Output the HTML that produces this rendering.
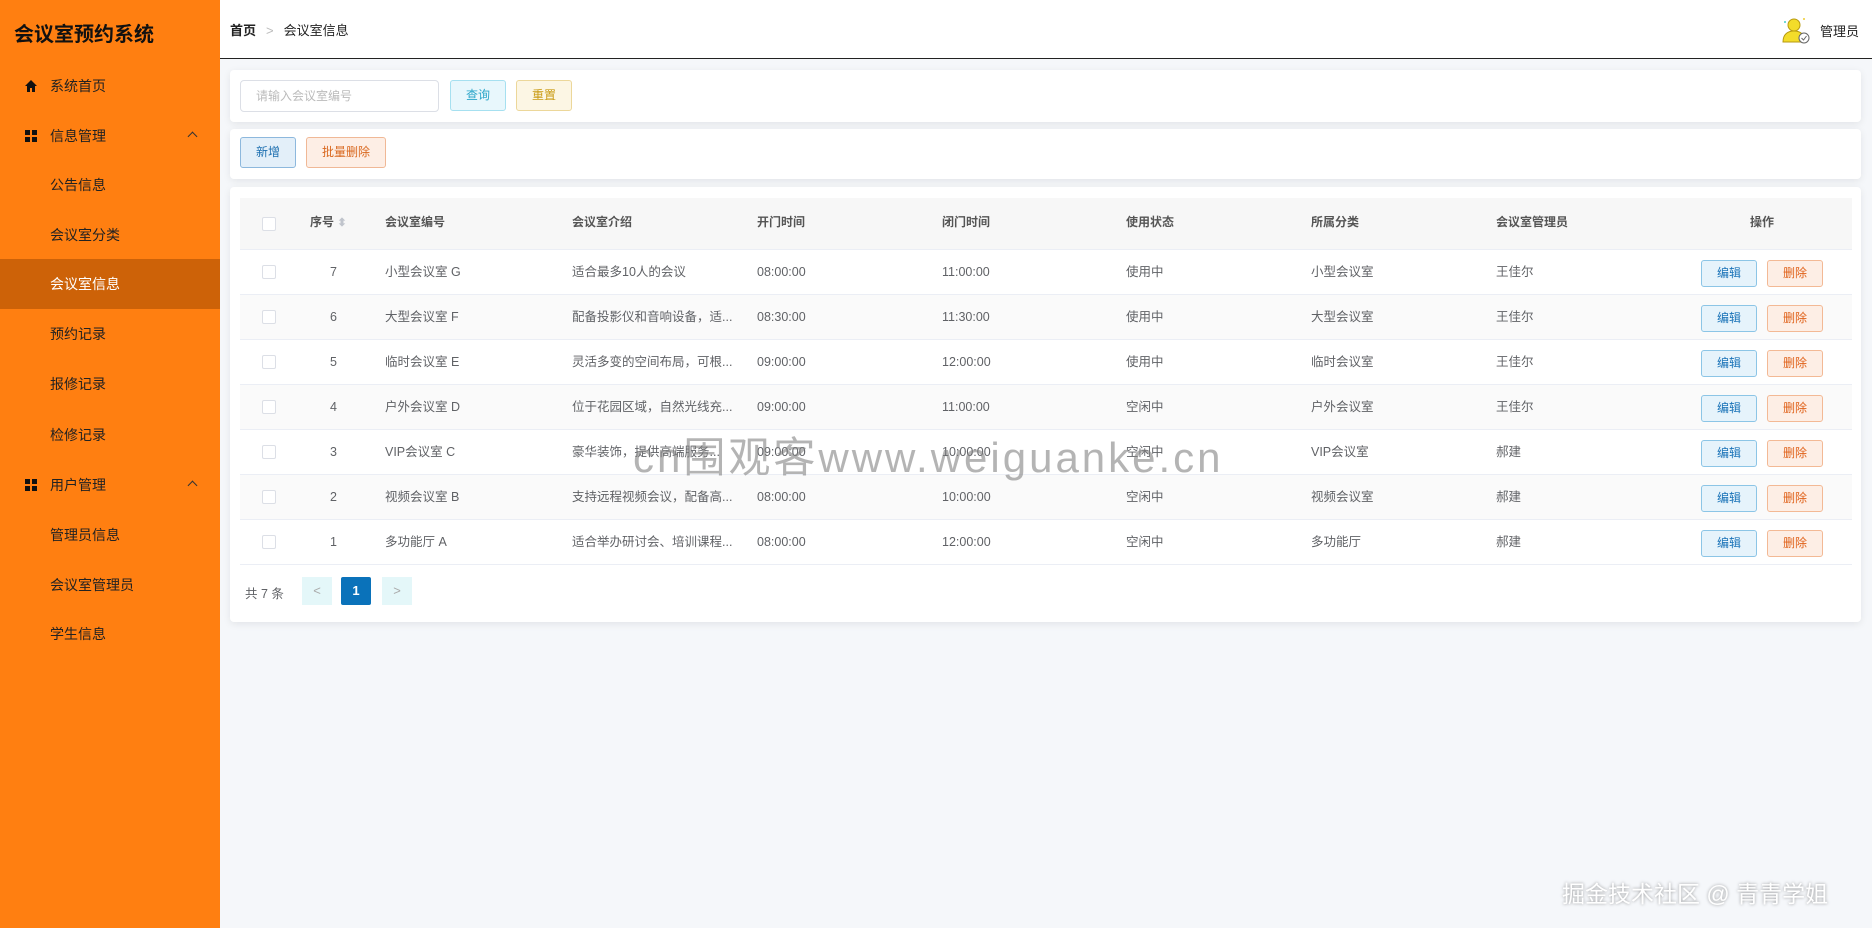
<!DOCTYPE html>
<html><head><meta charset="utf-8"><style>
*{margin:0;padding:0;box-sizing:border-box}
body{width:1872px;height:928px;overflow:hidden;background:#f5f7fa;font-family:"Liberation Sans","Noto Sans CJK SC",sans-serif;color:#606266;position:relative}
.side{position:absolute;left:0;top:0;width:220px;height:928px;background:#ff7f11}
.title{position:absolute;left:14px;top:18px;font-size:20px;font-weight:bold;color:#111}
.mi{position:absolute;left:0;width:220px;height:50px;line-height:50px;font-size:14px;color:#222}
.mi .t{position:absolute;left:50px}
.mi.act{background:#cd6208;color:#fff}
.sub .t{color:#222}
.ico{position:absolute;left:24px;top:18px}
.arr{position:absolute;left:189px;top:22px;width:7px;height:7px;border-left:1.2px solid #333;border-top:1.2px solid #333;transform:rotate(45deg)}
.hdr{position:absolute;left:220px;top:0;right:0;height:59px;background:#fff;border-bottom:1.5px solid #222}
.card{position:absolute;left:230px;width:1631px;background:#fff;border-radius:4px;box-shadow:0 2px 8px rgba(0,0,0,.08)}
.btn{position:absolute;height:31px;line-height:29px;text-align:center;font-size:12px;border-radius:3px;border:1px solid}
.row{position:absolute;left:240px;width:1612px;height:45px;border-bottom:1px solid #ebeef5;font-size:12.5px;color:#606266}
.row span{position:absolute;top:0;line-height:45px;white-space:nowrap}
.cb{position:absolute;left:262px;width:14px;height:14px;border:1px solid #dcdfe6;border-radius:2px;background:#fff}
.eb{position:absolute;left:1461px;top:10px;width:56px;height:27px;line-height:25px;text-align:center;font-size:12px;border:1px solid #8cc5e6;background:#e6f3fb;color:#1a73b8;border-radius:3px}
.db{position:absolute;left:1527px;top:10px;width:56px;height:27px;line-height:25px;text-align:center;font-size:12px;border:1px solid #f3b995;background:#fdeee5;color:#e0621a;border-radius:3px}
</style></head><body>
<div class="side">
<div class="title">会议室预约系统</div>
<div class="mi" style="top:61px"><svg class="ico" width="14" height="14" viewBox="0 0 14 14"><path d="M7 1L1 7h2v6h3V9h2v4h3V7h2z" fill="#111"/></svg><span class="t">系统首页</span></div>
<div class="mi" style="top:111px"><svg class="ico" width="14" height="14" viewBox="0 0 14 14"><rect x="1" y="1" width="5" height="5" fill="#111"/><rect x="8" y="1" width="5" height="5" fill="#111"/><rect x="1" y="8" width="5" height="5" fill="#111"/><rect x="8" y="8" width="5" height="5" fill="#111"/></svg><span class="t">信息管理</span><i class="arr"></i></div>
<div class="mi sub" style="top:160px"><span class="t">公告信息</span></div>
<div class="mi sub" style="top:210px"><span class="t">会议室分类</span></div>
<div class="mi act" style="top:259px"><span class="t" style="color:#fff">会议室信息</span></div>
<div class="mi sub" style="top:309px"><span class="t">预约记录</span></div>
<div class="mi sub" style="top:359px"><span class="t">报修记录</span></div>
<div class="mi sub" style="top:410px"><span class="t">检修记录</span></div>
<div class="mi" style="top:460px"><svg class="ico" width="14" height="14" viewBox="0 0 14 14"><rect x="1" y="1" width="5" height="5" fill="#111"/><rect x="8" y="1" width="5" height="5" fill="#111"/><rect x="1" y="8" width="5" height="5" fill="#111"/><rect x="8" y="8" width="5" height="5" fill="#111"/></svg><span class="t">用户管理</span><i class="arr"></i></div>
<div class="mi sub" style="top:510px"><span class="t">管理员信息</span></div>
<div class="mi sub" style="top:560px"><span class="t">会议室管理员</span></div>
<div class="mi sub" style="top:609px"><span class="t">学生信息</span></div>
</div>
<div class="hdr">
<div style="position:absolute;left:10px;top:20px;font-size:13px;color:#222"><b style="font-weight:bold">首页</b><span style="color:#bbb;margin:0 10px">&gt;</span>会议室信息</div>
<svg style="position:absolute;left:1560px;top:14px" width="32" height="32" viewBox="0 0 32 32"><circle cx="14" cy="11" r="6" fill="#f3dc2a" stroke="#b79a10"/><path d="M3 28c0-8 5-11 11-11s11 3 11 11z" fill="#f3dc2a" stroke="#b79a10"/><circle cx="24" cy="24" r="5" fill="#fff" stroke="#666"/><path d="M21.5 24l2 2 3-4" stroke="#666" fill="none"/><circle cx="5" cy="8" r="1" fill="#4cc"/><circle cx="24" cy="5" r="1" fill="#ec3"/></svg>
<div style="position:absolute;left:1600px;top:21px;font-size:13px;color:#222">管理员</div>
</div>
<div class="card" style="top:70px;height:52px">
<div style="position:absolute;left:10px;top:10px;width:199px;height:32px;border:1px solid #dcdfe6;border-radius:4px;font-size:12px;color:#bbb;line-height:30px;padding-left:15px">请输入会议室编号</div>
<div class="btn" style="left:220px;top:10px;width:56px;background:#e8f7fc;border-color:#a6e0f0;color:#2aa5c9">查询</div>
<div class="btn" style="left:286px;top:10px;width:56px;background:#fcf6e4;border-color:#ecd79a;color:#c99a12">重置</div>
</div>
<div class="card" style="top:129px;height:50px">
<div class="btn" style="left:10px;top:8px;width:56px;background:#e3eff9;border-color:#8db8dd;color:#1d6fb0">新增</div>
<div class="btn" style="left:76px;top:8px;width:80px;background:#fdeee5;border-color:#f0b896;color:#d9681f">批量删除</div>
</div>
<div class="card" style="top:187px;height:435px"></div>
<div class="row" style="top:198px;height:52px;background:#f7f7f7;font-weight:bold;color:#555;font-size:12px">
<div class="cb" style="left:22px;top:19px"></div>
<span style="left:70px;line-height:48px">序号 <span style="position:static;color:#c0c4cc;font-size:11px">⬍</span></span>
<span style="left:145px;line-height:48px">会议室编号</span><span style="left:332px;line-height:48px">会议室介绍</span><span style="left:517px;line-height:48px">开门时间</span><span style="left:702px;line-height:48px">闭门时间</span><span style="left:886px;line-height:48px">使用状态</span><span style="left:1071px;line-height:48px">所属分类</span><span style="left:1256px;line-height:48px">会议室管理员</span><span style="left:1510px;line-height:48px">操作</span>
</div>
<div id="rows"></div>
<div style="position:absolute;left:245px;top:583px;font-size:12.5px;color:#606266">共 7 条</div>
<div style="position:absolute;left:302px;top:577px;width:30px;height:28px;background:#e4f7f9;color:#aaa;text-align:center;line-height:28px;font-size:13px">&lt;</div>
<div style="position:absolute;left:341px;top:577px;width:30px;height:28px;background:#0a72ba;color:#fff;text-align:center;line-height:28px;font-size:13px;font-weight:bold;border-radius:2px">1</div>
<div style="position:absolute;left:382px;top:577px;width:30px;height:28px;background:#e4f7f9;color:#aaa;text-align:center;line-height:28px;font-size:13px">&gt;</div>
<div style="position:absolute;left:633px;top:424px;font-size:42px;color:rgba(130,130,130,.6);white-space:nowrap;letter-spacing:3px">cn围观客www.weiguanke.cn</div>
<div style="position:absolute;left:1562px;top:875px;font-size:23px;color:#fff;text-shadow:0 0 3px rgba(0,0,0,.4);white-space:nowrap">掘金技术社区 @ 青青学姐</div>
<script>
var d=[["7","小型会议室 G","适合最多10人的会议","08:00:00","11:00:00","使用中","小型会议室","王佳尔"],
["6","大型会议室 F","配备投影仪和音响设备，适...","08:30:00","11:30:00","使用中","大型会议室","王佳尔"],
["5","临时会议室 E","灵活多变的空间布局，可根...","09:00:00","12:00:00","使用中","临时会议室","王佳尔"],
["4","户外会议室 D","位于花园区域，自然光线充...","09:00:00","11:00:00","空闲中","户外会议室","王佳尔"],
["3","VIP会议室 C","豪华装饰，提供高端服务...","09:00:00","10:00:00","空闲中","VIP会议室","郝建"],
["2","视频会议室 B","支持远程视频会议，配备高...","08:00:00","10:00:00","空闲中","视频会议室","郝建"],
["1","多功能厅 A","适合举办研讨会、培训课程...","08:00:00","12:00:00","空闲中","多功能厅","郝建"]];
var xs=[145,332,517,702,886,1071,1256],h="";
d.forEach(function(r,i){var t=250+i*45;h+='<div class="row" style="top:'+t+'px;'+(i%2?'background:#fafafa':'')+'"><div class="cb" style="left:22px;top:15px"></div><span style="left:90px">'+r[0]+'</span>';
for(var j=1;j<8;j++)h+='<span style="left:'+xs[j-1]+'px">'+r[j]+'</span>';
h+='<div class="eb">编辑</div><div class="db">删除</div></div>';});
document.getElementById("rows").innerHTML=h;
</script>
</body></html>
